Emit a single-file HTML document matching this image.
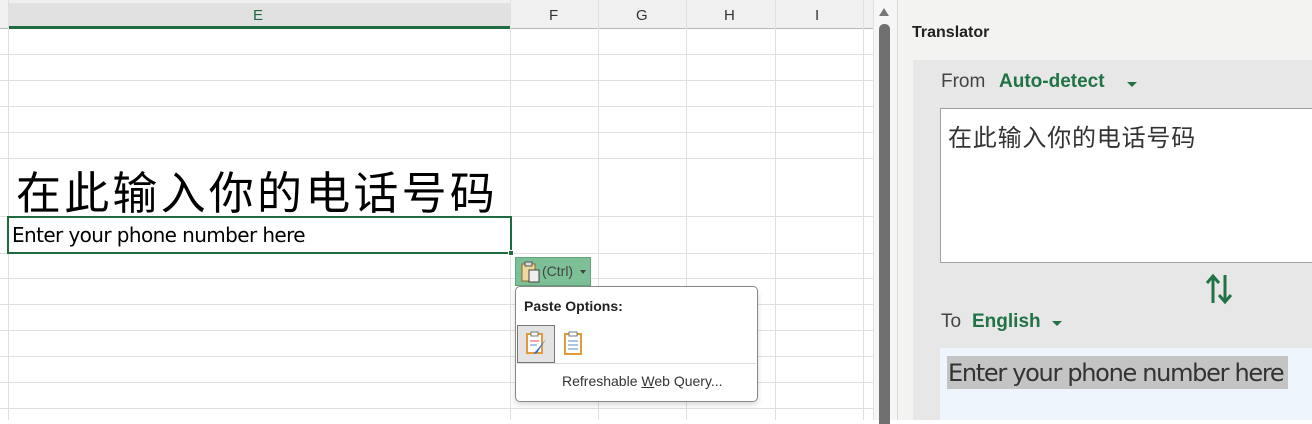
<!DOCTYPE html>
<html><head><style>
*{margin:0;padding:0;box-sizing:border-box}
body{width:1312px;height:420px;overflow:hidden;background:#fff;position:relative;font-family:"Liberation Sans","Noto Sans CJK SC",sans-serif}
.a{position:absolute}
.h{background:#e0e0e0}
.v{width:1px;background:#e0e0e0}
</style></head><body>
<div class="a" style="left:0;top:0;width:873px;height:28px;background:#f0f0f0"></div>
<div class="a" style="left:8px;top:3px;width:502px;height:23px;background:#e1e1e1"></div>
<div class="a" style="left:8px;top:26px;width:502px;height:3px;background:#1e6b41"></div>
<div class="a" style="left:510px;top:28px;width:363px;height:1px;background:#b8b8b8"></div>
<div class="a" style="left:0;top:28px;width:8px;height:1px;background:#b8b8b8"></div>
<div class="a" style="left:253px;top:7px;font-size:15px;color:#1e6b41">E</div>
<div class="a" style="left:549px;top:7px;font-size:15px;color:#333">F</div>
<div class="a" style="left:636px;top:7px;font-size:15px;color:#333">G</div>
<div class="a" style="left:724px;top:7px;font-size:15px;color:#333">H</div>
<div class="a" style="left:815px;top:7px;font-size:15px;color:#333">I</div>
<div class="a v" style="left:8px;top:0;height:420px"></div>
<div class="a v" style="left:510px;top:0;height:420px"></div>
<div class="a v" style="left:598px;top:0;height:420px"></div>
<div class="a v" style="left:686px;top:0;height:420px"></div>
<div class="a v" style="left:775px;top:0;height:420px"></div>
<div class="a v" style="left:863px;top:0;height:420px"></div>
<div class="a h" style="left:0;top:54px;width:873px;height:1px"></div>
<div class="a h" style="left:0;top:80px;width:873px;height:1px"></div>
<div class="a h" style="left:0;top:106px;width:873px;height:1px"></div>
<div class="a h" style="left:0;top:132px;width:873px;height:1px"></div>
<div class="a h" style="left:0;top:158px;width:873px;height:1px"></div>
<div class="a h" style="left:0;top:216px;width:873px;height:1px"></div>
<div class="a h" style="left:0;top:253px;width:873px;height:1px"></div>
<div class="a h" style="left:0;top:278px;width:873px;height:1px"></div>
<div class="a h" style="left:0;top:304px;width:873px;height:1px"></div>
<div class="a h" style="left:0;top:330px;width:873px;height:1px"></div>
<div class="a h" style="left:0;top:356px;width:873px;height:1px"></div>
<div class="a h" style="left:0;top:382px;width:873px;height:1px"></div>
<div class="a h" style="left:0;top:408px;width:873px;height:1px"></div>
<div class="a" style="left:9px;top:159px;width:501px;height:57px;background:#fff"></div>
<div class="a" style="left:16px;top:163px;font-size:45px;line-height:54px;color:#000;font-family:'Noto Sans CJK SC',sans-serif;letter-spacing:3.2px">在此输入你的电话号码</div>
<div class="a" style="left:7px;top:216px;width:505px;height:38px;border:2px solid #1e6b41;background:#fff"></div>
<div class="a" style="left:508px;top:250px;width:6px;height:6px;background:#1e6b41;border:1px solid #fff"></div>
<div class="a" style="left:12px;top:223px;font-size:20px;color:#000;font-family:'DejaVu Sans',sans-serif;letter-spacing:-0.6px">Enter your phone number here</div>
<div class="a" style="left:515px;top:257px;width:76px;height:29px;background:#7dbf96;border:1px solid #62a57c"></div>
<svg class="a" style="left:520px;top:261px" width="22" height="22" viewBox="0 0 22 22"><rect x="2" y="3" width="13" height="17" fill="#f0d9a0" stroke="#8a6a2a"/><rect x="5" y="1" width="7" height="4" fill="#ddd" stroke="#555"/><rect x="9" y="9" width="10" height="12" fill="#eee" stroke="#444"/></svg>
<div class="a" style="left:542px;top:263px;font-size:14px;color:#444">(Ctrl)</div>
<div class="a" style="left:580px;top:270px;width:0;height:0;border-left:3.5px solid transparent;border-right:3.5px solid transparent;border-top:4px solid #444"></div>
<div class="a" style="left:515px;top:286px;width:243px;height:116px;background:#fff;border:1px solid #888;border-radius:5px;box-shadow:0 3px 6px rgba(0,0,0,.15)"></div>
<div class="a" style="left:524px;top:298px;font-size:14px;font-weight:bold;color:#222">Paste Options:</div>
<div class="a" style="left:517px;top:325px;width:38px;height:38px;background:#e3e3e3;border:1px solid #777"></div>
<svg class="a" style="left:524px;top:331px" width="28" height="26" viewBox="0 0 28 26"><rect x="3" y="3" width="15" height="19" fill="#fff" stroke="#e39b3a" stroke-width="2"/><rect x="7" y="1" width="7" height="4" fill="#fff" stroke="#777"/><line x1="6" y1="10" x2="15" y2="10" stroke="#e45" /><line x1="6" y1="14" x2="13" y2="14" stroke="#58c"/><path d="M22 8 L12 20 L9 23 L13 22 Z" fill="#2a6fc9"/></svg>
<svg class="a" style="left:563px;top:331px" width="22" height="26" viewBox="0 0 22 26"><rect x="2" y="3" width="16" height="20" fill="#fff" stroke="#e39b3a" stroke-width="2"/><rect x="6" y="1" width="8" height="4" fill="#fff" stroke="#777"/><line x1="5" y1="10" x2="15" y2="10" stroke="#58c"/><line x1="5" y1="14" x2="15" y2="14" stroke="#58c"/><line x1="5" y1="18" x2="15" y2="18" stroke="#58c"/></svg>
<div class="a" style="left:517px;top:363px;width:239px;height:1px;background:#ddd"></div>
<div class="a" style="left:562px;top:373px;font-size:14px;color:#333">Refreshable <u>W</u>eb Query...</div>
<div class="a" style="left:873px;top:0;width:25px;height:420px;background:#f6f6f6;border-left:1px solid #e0e0e0"></div>
<div class="a" style="left:879px;top:8px;width:0;height:0;border-left:5px solid transparent;border-right:5px solid transparent;border-bottom:8px solid #777"></div>
<div class="a" style="left:879px;top:24px;width:11px;height:400px;background:#707070;border-radius:5px 5px 0 0"></div>
<div class="a" style="left:897px;top:0;width:1px;height:420px;background:#d8d8d8"></div>
<div class="a" style="left:898px;top:0;width:414px;height:420px;background:#f3f3f2"></div>
<div class="a" style="left:912px;top:24px;font-size:16px;font-weight:bold;color:#222">Translator</div>
<div class="a" style="left:913px;top:60px;width:399px;height:360px;background:#e7e7e7"></div>
<div class="a" style="left:941px;top:71px;font-size:19px;color:#444">From</div>
<div class="a" style="left:999px;top:71px;font-size:19px;font-weight:bold;color:#217346">Auto-detect</div>
<div class="a" style="left:1127px;top:82px;border-left:5px solid transparent;border-right:5px solid transparent;border-top:5px solid #217346"></div>
<div class="a" style="left:940px;top:108px;width:380px;height:155px;background:#fff;border:1px solid #a0a0a0"></div>
<div class="a" style="left:948px;top:118px;font-size:24px;color:#333;font-family:'Noto Sans CJK SC',sans-serif;letter-spacing:0.8px">在此输入你的电话号码</div>
<svg class="a" style="left:1205px;top:273px" width="28" height="32" viewBox="0 0 28 32"><g stroke="#217346" stroke-width="3" fill="none"><path d="M8 30 V4 M2 10 L8 3 L14 10"/><path d="M20 2 V28 M14 22 L20 29 L26 22"/></g></svg>
<div class="a" style="left:941px;top:311px;font-size:19px;color:#444">To</div>
<div class="a" style="left:972px;top:311px;font-size:19px;font-weight:bold;color:#217346">English</div>
<div class="a" style="left:1052px;top:321px;border-left:5px solid transparent;border-right:5px solid transparent;border-top:5px solid #217346"></div>
<div class="a" style="left:940px;top:348px;width:372px;height:72px;background:#eef5fd"></div>
<div class="a" style="left:947px;top:356px;height:33px;width:341px;background:#c4c4c4"></div>
<div class="a" style="left:948px;top:359px;font-size:24px;color:#333;font-family:'DejaVu Sans',sans-serif;letter-spacing:-1.3px">Enter your phone number here</div>
</body></html>
